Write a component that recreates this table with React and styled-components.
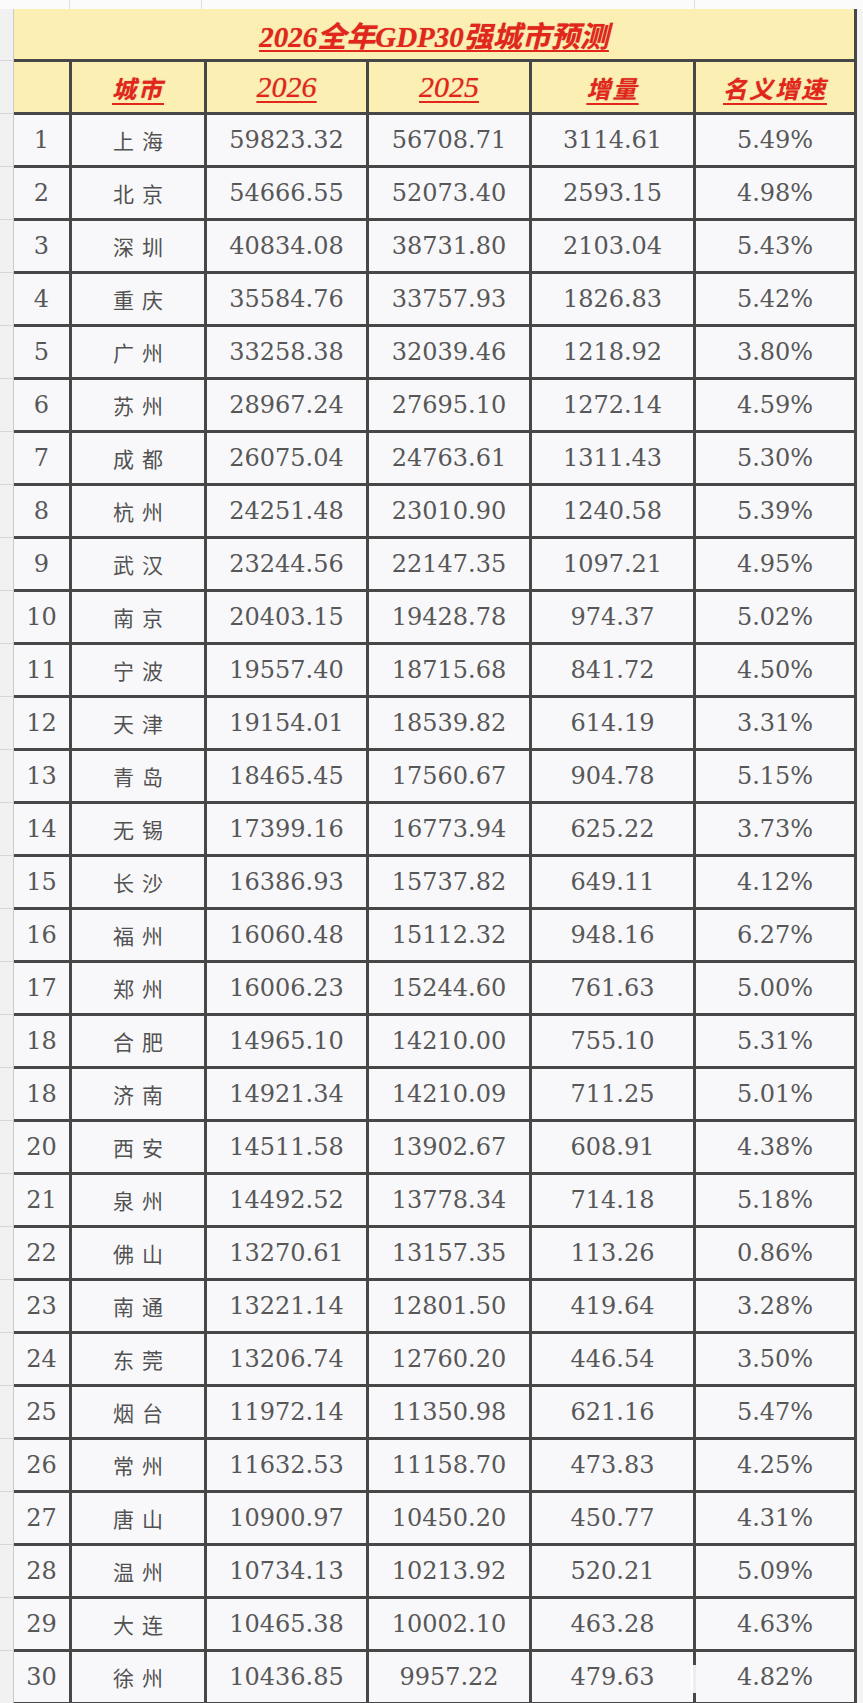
import React from 'react';
import styled, { createGlobalStyle } from 'styled-components';

const GlobalStyle = createGlobalStyle`
  html, body {
    margin: 0;
    padding: 0;
    background: #f3f3f3;
  }
  #root {
    width: 863px;
    height: 1703px;
    overflow: hidden;
  }
`;

const RED = '#e2261c';
const LINE = '#474747';
const YELLOW = '#fbefb3';

const Sheet = styled.div`
  position: relative;
  width: 863px;
  height: 1703px;
  overflow: hidden;
  display: flex;
  flex-direction: column;
  background: #f4f4f4;
`;

const TopStrip = styled.div`
  display: flex;
  flex-shrink: 0;
  height: 9px;
  background: #fbfbfb;
`;

const TopCell = styled.div`
  box-sizing: border-box;
  width: ${({ $w }) => $w}px;
  border-right: 1px solid #dedede;
`;

const Body = styled.div`
  display: flex;
  align-items: flex-start;
`;

const Gutter = styled.div`
  flex-shrink: 0;
  width: 13px;
  height: 1694px;
  background: repeating-linear-gradient(to bottom, #f1f1f1 0 52px, #d6d6d6 52px 53px);
  background-position: 0 -1px;
`;

const Table = styled.div`
  display: grid;
  grid-template-columns: 55px 132px 159px 160px 161px 158px;
  grid-auto-rows: 50px;
  gap: 3px;
  background: ${LINE};
  border-left: 1px solid #cbcbcb;
  border-right: 3px solid ${LINE};
  border-bottom: 3px solid ${LINE};
`;

const TitleCell = styled.div`
  grid-column: 1 / -1;
  display: flex;
  align-items: center;
  justify-content: center;
  background: ${YELLOW};
`;

const TitleText = styled.span`
  color: ${RED};
  font-family: "Liberation Serif", "Noto Sans CJK SC", serif;
  font-size: 29px;
  font-weight: 700;
  font-style: italic;
  text-decoration: underline;
  text-decoration-thickness: 2px;
  text-underline-offset: 3px;
  text-shadow: 0 0 1px rgba(150, 20, 10, 0.5);
`;

const HeadCell = styled.div`
  display: flex;
  align-items: center;
  justify-content: center;
  background: ${YELLOW};
`;

const HeadText = styled.span`
  color: ${RED};
  font-family: ${({ $cjk }) =>
    $cjk ? '"Noto Sans CJK SC", sans-serif' : '"Liberation Serif", serif'};
  font-size: ${({ $cjk }) => ($cjk ? '24px' : '30px')};
  font-weight: ${({ $cjk }) => ($cjk ? 700 : 400)};
  font-style: italic;
  letter-spacing: ${({ $cjk }) => ($cjk ? '2px' : '0')};
  text-decoration: underline;
  text-decoration-thickness: 2px;
  text-underline-offset: ${({ $cjk }) => ($cjk ? '5px' : '4px')};
  text-shadow: 0 0 1px rgba(150, 20, 10, 0.5);
`;

const Cell = styled.div`
  display: flex;
  align-items: center;
  justify-content: center;
  background: #f8f8fa;
  color: #575757;
  font-family: "DejaVu Serif", "Liberation Serif", serif;
  font-size: 24px;
`;

const City = styled.span`
  font-family: "Noto Sans CJK SC", sans-serif;
  font-size: 21px;
  color: #525252;
  letter-spacing: 8px;
  margin-right: -8px;
`;

// the white bar of the photo watermark lying over the last row
const WatermarkBar = styled.span`
  position: absolute;
  left: 691px;
  top: 1665px;
  width: 5px;
  height: 28px;
  background: rgba(255, 255, 255, 0.9);
`;

const rows = [
  [1, '上海', '59823.32', '56708.71', '3114.61', '5.49%'],
  [2, '北京', '54666.55', '52073.40', '2593.15', '4.98%'],
  [3, '深圳', '40834.08', '38731.80', '2103.04', '5.43%'],
  [4, '重庆', '35584.76', '33757.93', '1826.83', '5.42%'],
  [5, '广州', '33258.38', '32039.46', '1218.92', '3.80%'],
  [6, '苏州', '28967.24', '27695.10', '1272.14', '4.59%'],
  [7, '成都', '26075.04', '24763.61', '1311.43', '5.30%'],
  [8, '杭州', '24251.48', '23010.90', '1240.58', '5.39%'],
  [9, '武汉', '23244.56', '22147.35', '1097.21', '4.95%'],
  [10, '南京', '20403.15', '19428.78', '974.37', '5.02%'],
  [11, '宁波', '19557.40', '18715.68', '841.72', '4.50%'],
  [12, '天津', '19154.01', '18539.82', '614.19', '3.31%'],
  [13, '青岛', '18465.45', '17560.67', '904.78', '5.15%'],
  [14, '无锡', '17399.16', '16773.94', '625.22', '3.73%'],
  [15, '长沙', '16386.93', '15737.82', '649.11', '4.12%'],
  [16, '福州', '16060.48', '15112.32', '948.16', '6.27%'],
  [17, '郑州', '16006.23', '15244.60', '761.63', '5.00%'],
  [18, '合肥', '14965.10', '14210.00', '755.10', '5.31%'],
  [18, '济南', '14921.34', '14210.09', '711.25', '5.01%'],
  [20, '西安', '14511.58', '13902.67', '608.91', '4.38%'],
  [21, '泉州', '14492.52', '13778.34', '714.18', '5.18%'],
  [22, '佛山', '13270.61', '13157.35', '113.26', '0.86%'],
  [23, '南通', '13221.14', '12801.50', '419.64', '3.28%'],
  [24, '东莞', '13206.74', '12760.20', '446.54', '3.50%'],
  [25, '烟台', '11972.14', '11350.98', '621.16', '5.47%'],
  [26, '常州', '11632.53', '11158.70', '473.83', '4.25%'],
  [27, '唐山', '10900.97', '10450.20', '450.77', '4.31%'],
  [28, '温州', '10734.13', '10213.92', '520.21', '5.09%'],
  [29, '大连', '10465.38', '10002.10', '463.28', '4.63%'],
  [30, '徐州', '10436.85', '9957.22', '479.63', '4.82%'],
];

const headers = [
  { label: '', cjk: false },
  { label: '城市', cjk: true },
  { label: '2026', cjk: false },
  { label: '2025', cjk: false },
  { label: '增量', cjk: true },
  { label: '名义增速', cjk: true },
];

const App = () => (
  <>
    <GlobalStyle />
    <Sheet>
      <TopStrip>
        <TopCell $w={70} />
        <TopCell $w={132} />
        <TopCell $w={493} />
      </TopStrip>
      <Body>
        <Gutter />
        <Table>
          <TitleCell>
            <TitleText>2026全年GDP30强城市预测</TitleText>
          </TitleCell>

          {headers.map((h, i) => (
            <HeadCell key={`h${i}`}>
              {h.label && <HeadText $cjk={h.cjk}>{h.label}</HeadText>}
            </HeadCell>
          ))}

          {rows.map(([rank, city, gdp26, gdp25, diff, rate]) => (
            <React.Fragment key={`${rank}-${city}`}>
              <Cell>{rank}</Cell>
              <Cell>
                <City>{city}</City>
              </Cell>
              <Cell>{gdp26}</Cell>
              <Cell>{gdp25}</Cell>
              <Cell>{diff}</Cell>
              <Cell>{rate}</Cell>
            </React.Fragment>
          ))}
        </Table>
      </Body>
      <WatermarkBar />
    </Sheet>
  </>
);

export default App;
